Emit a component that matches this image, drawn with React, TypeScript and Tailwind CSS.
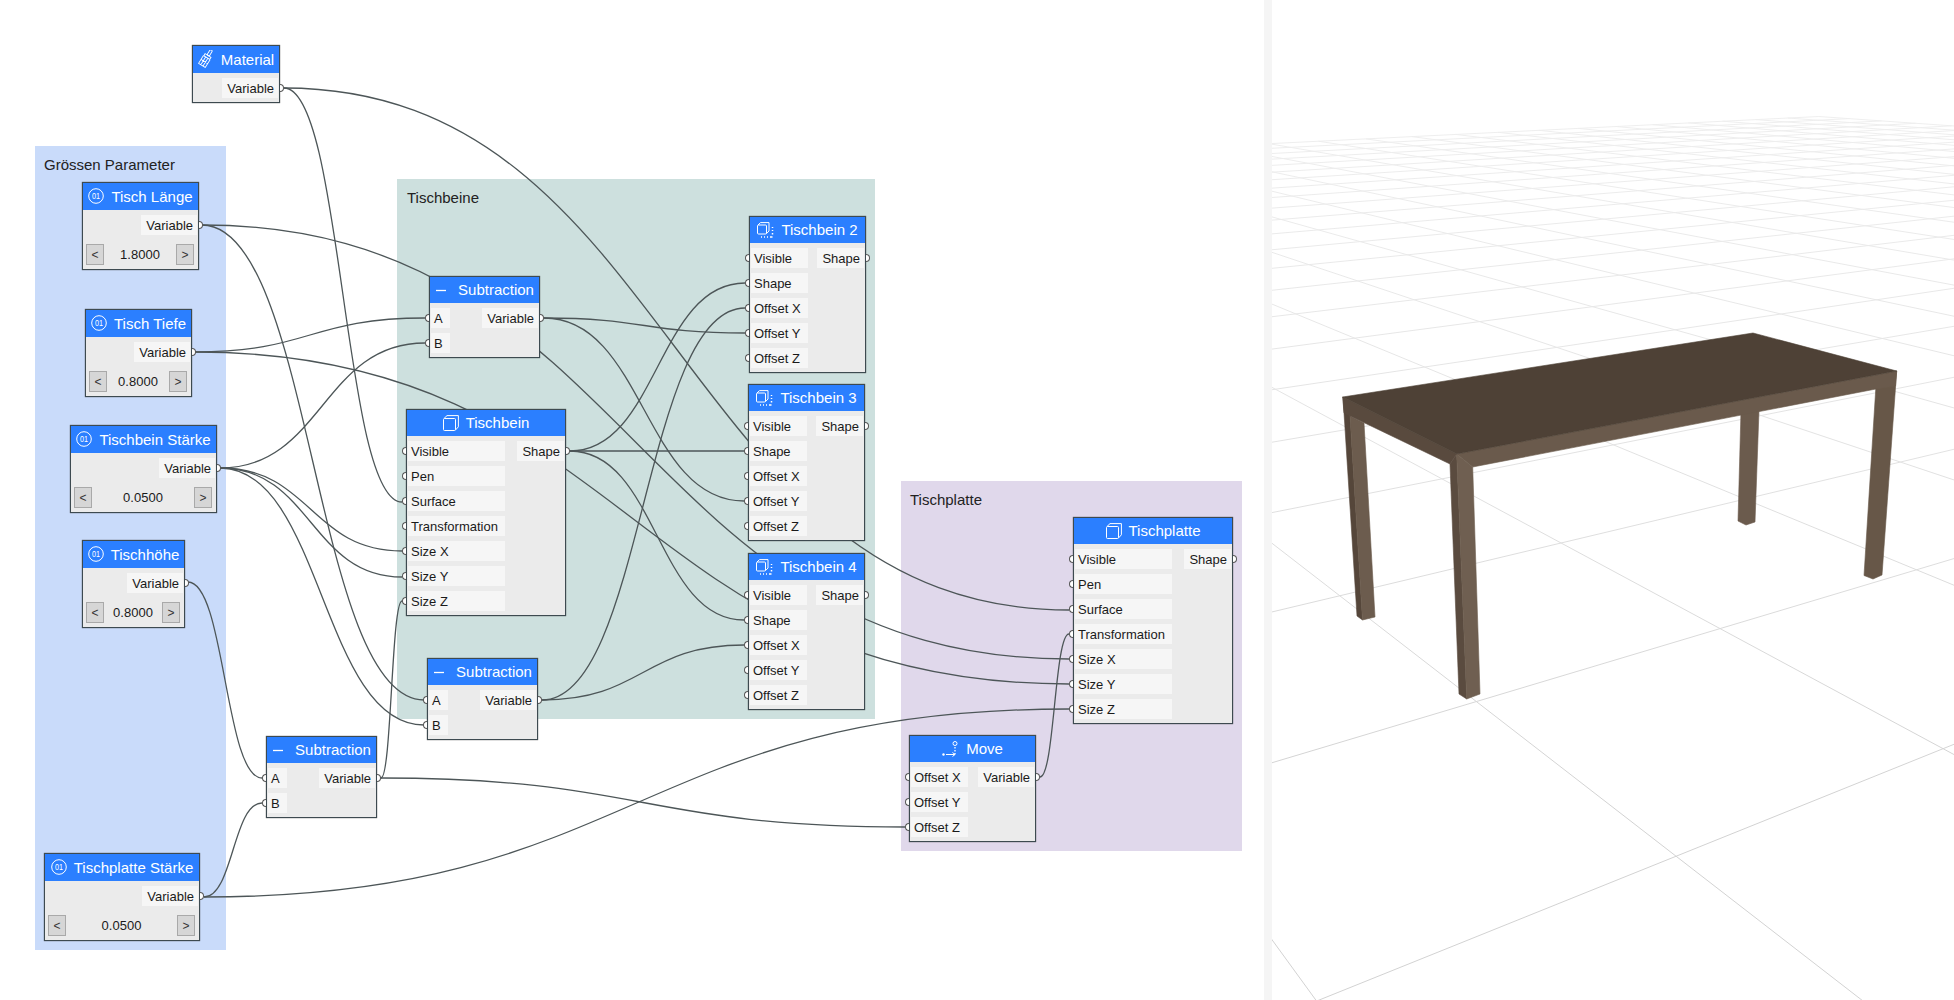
const FONT = "font-['Liberation_Sans',Arial,sans-serif]";

function ParamIcon() {
  return (
    <svg width="16" height="16" viewBox="0 0 16 16" fill="none" stroke="white" strokeWidth="1">
      <circle cx="8" cy="8" r="7.3" />
      <text x="8" y="11.2" textAnchor="middle" fontSize="9.5" fill="white" stroke="none" fontFamily="Liberation Sans" textLength="8" lengthAdjust="spacingAndGlyphs">01</text>
    </svg>
  );
}

function MinusIcon() {
  return (
    <svg width="16" height="16" viewBox="0 0 16 16" fill="none" stroke="white" strokeWidth="1.3">
      <path d="M1 8.5h10" />
    </svg>
  );
}

function BoxIcon() {
  return (
    <svg width="16" height="16" viewBox="0 0 16 16" fill="none" stroke="white" strokeWidth="1">
      <rect x="0.5" y="3.5" width="12" height="12" rx="1" />
      <path d="M1 3.5 4 .6h11.4v11.2L12.5 15" />
    </svg>
  );
}

function MoveShapeIcon() {
  return (
    <svg width="17" height="16" viewBox="0 0 17 16" fill="none" stroke="white" strokeWidth="1">
      <rect x="0.5" y="3" width="9" height="9" rx="1" />
      <path d="M1 3 3.5.6h8.5v8.4L9.5 11.6" />
      <path d="M15.5 5v1M15.5 8v1M15.5 11v1.5" strokeWidth="1.5" />
      <path d="M4 15h1M7 15h1M10 15h1M13 15h2.5" strokeWidth="1.3" />
    </svg>
  );
}

function MoveIcon() {
  return (
    <svg width="17" height="16" viewBox="0 0 17 16" fill="none" stroke="white" strokeWidth="1">
      <circle cx="13" cy="2.5" r="2" />
      <path d="M13 6v1.4M13 9v1.4M13 12v1.6" strokeWidth="1.3" />
      <path d="M4 13.5h9M10.5 11.5l2.5 2-2.5 2" />
      <circle cx="1.5" cy="13.5" r="1.2" fill="white" stroke="none" />
    </svg>
  );
}

function BrushIcon() {
  return (
    <svg width="16" height="18" viewBox="0 0 16 18" fill="none" stroke="white" strokeWidth="0.9">
      <g transform="rotate(32 8 9)">
        <rect x="6.6" y="-1.5" width="2.6" height="6.5" rx="1.3" />
        <rect x="4.4" y="5" width="7" height="2.4" />
        <path d="M4 7.4v9.2h7.8V7.4M6.6 7.4v9.2M9.2 7.4v9.2M4 12h7.8" />
      </g>
    </svg>
  );
}

function Row({ label, side }: { label: string; side: "in" | "out" }) {
  return (
    <div className={side === "in"
      ? "relative flex h-5 items-center bg-[#f6f6f6] pl-[3px] pr-[7px]"
      : "relative flex h-5 items-center justify-end bg-[#f6f6f6] pl-[5px] pr-[4px]"}>
      <span
        className={side === "in"
          ? "absolute -left-[6px] top-[6px] h-[8px] w-[4px] rounded-l-full border border-r-0 border-[#555] bg-white"
          : "absolute -right-[6px] top-[6px] h-[8px] w-[4px] rounded-r-full border border-l-0 border-[#555] bg-white"}
      />
      {label}
    </div>
  );
}

type NodeProps = {
  title: string;
  icon: React.ReactNode;
  pos: string;
  inputs?: string[];
  outputs?: string[];
  value?: string;
};

function Node({ title, icon, pos, inputs = [], outputs = [], value }: NodeProps) {
  return (
    <div className={`absolute border border-[#3d4a50] bg-[#ebebeb] text-[13px] leading-none text-[#1a1a1a] shadow-[0_0_1px_#444] ${pos}`}>
      <div className={`-mx-px -mt-px flex items-center justify-center gap-[7px] border border-b-0 border-[#3d4a50] bg-[#2b7fff] pb-px text-[15px] text-white ${inputs.length === 0 ? "h-[28px]" : "h-[27px]"}`}>
        {icon}
        <span>{title}</span>
      </div>
      <div className="flex justify-between px-px pb-[4px] pt-[5px]">
        <div className="flex flex-col gap-[5px]">
          {inputs.map((i) => <Row key={i} label={i} side="in" />)}
        </div>
        <div className="flex flex-col gap-[5px]">
          {outputs.map((o) => <Row key={o} label={o} side="out" />)}
        </div>
      </div>
      {value && (
        <div className="mt-[5px] flex items-center justify-between pb-[4px] pl-[3px] pr-[4px]">
          <button className="flex h-[21px] w-[18px] items-center justify-center border border-[#a9a9a9] bg-[#d6d6d6] text-[12px] text-[#333]">&lt;</button>
          <span>{value}</span>
          <button className="flex h-[21px] w-[18px] items-center justify-center border border-[#a9a9a9] bg-[#d6d6d6] text-[12px] text-[#333]">&gt;</button>
        </div>
      )}
    </div>
  );
}

const shapeInputs = ["Visible", "Pen", "Surface", "Transformation", "Size X", "Size Y", "Size Z"];
const moveInputs = ["Visible", "Shape", "Offset X", "Offset Y", "Offset Z"];

// output port -> input port, page coordinates
const wires: [number, number, number, number][] = [
  // Material
  [284, 88, 402, 502],
  [284, 88, 1069, 610],
  // Tisch Laenge
  [202, 225, 424, 700],
  [202, 225, 1069, 659],
  // Tisch Tiefe
  [195, 352, 425, 318],
  [195, 352, 1069, 684],
  // Tischbein Staerke
  [220, 468, 425, 343],
  [220, 468, 402, 551],
  [220, 468, 402, 577],
  [220, 468, 424, 725],
  // Tischhoehe
  [188, 582, 262, 778],
  // Tischplatte Staerke
  [204, 897, 262, 803],
  [204, 897, 1069, 709],
  // Subtractions
  [381, 778, 402, 601],
  [381, 778, 905, 827],
  [544, 318, 745, 333],
  [544, 318, 744, 501],
  [542, 700, 745, 308],
  [542, 700, 744, 645],
  // Tischbein shape
  [570, 451, 745, 283],
  [570, 451, 744, 451],
  [570, 451, 744, 620],
  // Move
  [1040, 777, 1069, 634],
];

function wirePath([x1, y1, x2, y2]: [number, number, number, number]) {
  const d = (x2 - x1) / 2;
  return `M${x1} ${y1}C${x1 + d} ${y1} ${x2 - d} ${y2} ${x2} ${y2}`;
}

// ground plane -> screen, built from the two vanishing points of the floor grid
function project(u: number, v: number) {
  const w = 0.0918 * u - 0.1435 * v + 1;
  return [(344.2 * u - 87.8 * v + 1561) / w, (1.93 * u - 4.59 * v + 543) / w];
}

function gridLine(ax: number, ay: number, bx: number, by: number) {
  const a = project(ax, ay);
  const b = project(bx, by);
  return `M${a[0].toFixed(1)} ${a[1].toFixed(1)}L${b[0].toFixed(1)} ${b[1].toFixed(1)}`;
}

const U_MAX = 21;
const V_MIN = -20;

function gridLines() {
  const lines: string[] = [];
  for (let u = -19; u <= U_MAX; u++) {
    // stop before the horizon behind the camera
    const vMax = Math.min(20, (0.85 + 0.0918 * u) / 0.1435);
    if (vMax > V_MIN) lines.push(gridLine(u, V_MIN, u, vMax));
  }
  for (let v = V_MIN; v <= 20; v++) {
    const uMin = Math.max(-19, (0.1435 * v - 0.85) / 0.0918);
    if (uMin < U_MAX) lines.push(gridLine(uMin, v, U_MAX, v));
  }
  return lines;
}

function Face({ points, fill }: { points: string; fill: string }) {
  return <polygon points={points} fill={fill} stroke={fill} strokeWidth="0.6" strokeLinejoin="round" />;
}

function Scene() {
  return (
    <svg width="682" height="1000" viewBox="1272 0 682 1000">
      <defs>
        <linearGradient id="floor" gradientUnits="userSpaceOnUse" x1="0" y1="110" x2="0" y2="800">
          <stop offset="0" stopColor="#efefef" />
          <stop offset="0.5" stopColor="#e2e2e2" />
          <stop offset="1" stopColor="#d2d2d2" />
        </linearGradient>
      </defs>
      {gridLines().map((d) => <path key={d} d={d} fill="none" stroke="url(#floor)" strokeWidth="1" />)}

      {/* far right leg */}
      <Face points="1741,410 1759,410 1755,522 1746,525 1738,521" fill="#6b5b4d" />
      {/* far left leg */}
      <Face points="1343,397 1350,416 1362.5,620 1357,616" fill="#55463a" />
      <Face points="1350,416 1364,423 1375,617 1362.5,620" fill="#6c5c4e" />
      {/* right leg */}
      <Face points="1876,385 1896.7,371 1882,575 1873,579 1864,575.5" fill="#675748" />
      {/* side faces */}
      <Face points="1342.7,397 1456.7,454 1450,464 1344,413" fill="#594a3e" />
      <Face points="1456.7,454 1896.7,371 1895.5,386 1876,389 1472.7,467" fill="#6a5a4c" />
      {/* near leg */}
      <Face points="1450,464 1456.7,454 1466.7,699 1459,694" fill="#5a4b3f" />
      <Face points="1456.7,454 1472.7,467 1480,694 1466.7,699" fill="#6f5f51" />
      {/* top */}
      <Face points="1342.7,397 1753,333 1896.7,371 1456.7,454" fill="#4e4136" />
    </svg>
  );
}

export default function App() {
  return (
    <div className={`flex h-[1000px] w-[1954px] overflow-hidden bg-white ${FONT}`}>
      <div className="relative h-full w-[1264px]">
        <div className="absolute left-[35px] top-[146px] h-[804px] w-[191px] bg-[#c9dbfa] pl-[9px] pt-[8px] text-[15px] text-[#222]">Grössen Parameter</div>
        <div className="absolute left-[397px] top-[179px] h-[540px] w-[478px] bg-[#cde0de] pl-[10px] pt-[8px] text-[15px] text-[#222]">Tischbeine</div>
        <div className="absolute left-[901px] top-[481px] h-[370px] w-[341px] bg-[#e0d8eb] pl-[9px] pt-[8px] text-[15px] text-[#222]">Tischplatte</div>

        <svg className="absolute inset-0" width="1264" height="1000" fill="none" stroke="#4d5658" strokeWidth="1.3">
          {wires.map((w) => <path key={w.join()} d={wirePath(w)} />)}
        </svg>

        <Node title="Material" icon={<BrushIcon />} pos="left-[192px] top-[45px] w-[88px]" outputs={["Variable"]} />
        <Node title="Tisch Länge" icon={<ParamIcon />} pos="left-[82px] top-[182px] w-[117px]" outputs={["Variable"]} value="1.8000" />
        <Node title="Tisch Tiefe" icon={<ParamIcon />} pos="left-[85px] top-[309px] w-[107px]" outputs={["Variable"]} value="0.8000" />
        <Node title="Tischbein Stärke" icon={<ParamIcon />} pos="left-[70px] top-[425px] w-[147px]" outputs={["Variable"]} value="0.0500" />
        <Node title="Tischhöhe" icon={<ParamIcon />} pos="left-[82px] top-[540px] w-[103px]" outputs={["Variable"]} value="0.8000" />
        <Node title="Tischplatte Stärke" icon={<ParamIcon />} pos="left-[44px] top-[853px] w-[156px]" outputs={["Variable"]} value="0.0500" />
        <Node title="Subtraction" icon={<MinusIcon />} pos="left-[266px] top-[736px] w-[111px]" inputs={["A", "B"]} outputs={["Variable"]} />

        <Node title="Subtraction" icon={<MinusIcon />} pos="left-[429px] top-[276px] w-[111px]" inputs={["A", "B"]} outputs={["Variable"]} />
        <Node title="Tischbein" icon={<BoxIcon />} pos="left-[406px] top-[409px] w-[160px]" inputs={shapeInputs} outputs={["Shape"]} />
        <Node title="Subtraction" icon={<MinusIcon />} pos="left-[427px] top-[658px] w-[111px]" inputs={["A", "B"]} outputs={["Variable"]} />
        <Node title="Tischbein 2" icon={<MoveShapeIcon />} pos="left-[749px] top-[216px] w-[117px]" inputs={moveInputs} outputs={["Shape"]} />
        <Node title="Tischbein 3" icon={<MoveShapeIcon />} pos="left-[748px] top-[384px] w-[117px]" inputs={moveInputs} outputs={["Shape"]} />
        <Node title="Tischbein 4" icon={<MoveShapeIcon />} pos="left-[748px] top-[553px] w-[117px]" inputs={moveInputs} outputs={["Shape"]} />

        <Node title="Tischplatte" icon={<BoxIcon />} pos="left-[1073px] top-[517px] w-[160px]" inputs={shapeInputs} outputs={["Shape"]} />
        <Node title="Move" icon={<MoveIcon />} pos="left-[909px] top-[735px] w-[127px]" inputs={["Offset X", "Offset Y", "Offset Z"]} outputs={["Variable"]} />
      </div>
      <div className="h-full w-2 bg-[#f5f5f5]" />
      <div className="h-full flex-1">
        <Scene />
      </div>
    </div>
  );
}
